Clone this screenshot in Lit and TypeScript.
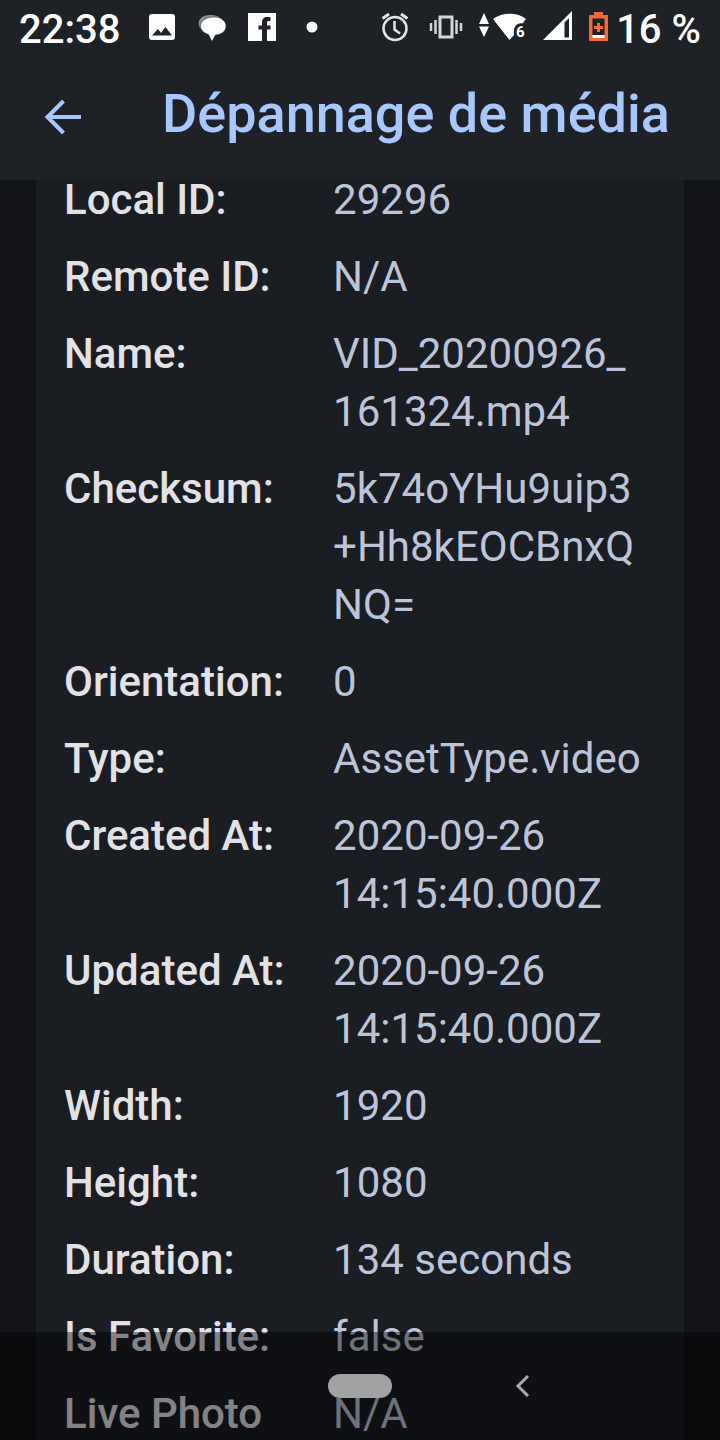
import { LitElement, html, css, svg } from "lit";
import { customElement } from "lit/decorators.js";

interface Row {
  label: string;
  value: string;
}

const ROWS: Row[] = [
  { label: "Local ID:", value: "29296" },
  { label: "Remote ID:", value: "N/A" },
  { label: "Name:", value: "VID_20200926_\n161324.mp4" },
  { label: "Checksum:", value: "5k74oYHu9uip3\n+Hh8kEOCBnxQ\nNQ=" },
  { label: "Orientation:", value: "0" },
  { label: "Type:", value: "AssetType.video" },
  { label: "Created At:", value: "2020-09-26\n14:15:40.000Z" },
  { label: "Updated At:", value: "2020-09-26\n14:15:40.000Z" },
  { label: "Width:", value: "1920" },
  { label: "Height:", value: "1080" },
  { label: "Duration:", value: "134 seconds" },
  { label: "Is Favorite:", value: "false" },
  { label: "Live Photo", value: "N/A" },
];

const icon = (width: number, body: unknown) => html`
  <svg class="icon" width=${width} height="32" viewBox="0 0 ${width} 32" aria-hidden="true">${body}</svg>
`;

@customElement("status-bar")
export class StatusBar extends LitElement {
  static styles = css`
    :host {
      display: flex;
      justify-content: space-between;
      align-items: center;
      height: 58px;
      padding: 0 19px;
      color: #fff;
      font: 500 40px/60px Roboto, sans-serif;
      white-space: nowrap;
    }
    .group {
      display: flex;
      align-items: center;
    }
    .notices {
      gap: 22px;
    }
    .time {
      margin-right: 6px;
    }
    .time,
    .level {
      padding-top: 2px;
    }
    .system {
      gap: 16px;
    }
    .battery {
      gap: 8px;
    }
    .icon {
      display: block;
      flex: none;
      overflow: visible;
    }
    .six {
      font: 700 15px Roboto, sans-serif;
    }
  `;

  render() {
    return html`
      <div class="group notices">
        <span class="time">22:38</span>
        ${icon(28, svg`<path fill="#fff" fill-rule="evenodd" d="M4 1h20q3 0 3 3v20q0 3-3 3H4q-3 0-3-3V4q0-3 3-3zM4 22.500h20l-6.500-8.500-4.500 6-3-4z"/>`)}
        ${icon(28, svg`
          <path fill="#8b8d90" d="M2 15C-2 8 3 2 12 2c5 0 9 1 11 4L6 17z"/>
          <path fill="#fff" stroke="#1e2125" stroke-width=".5" d="M16 4C8.500 4 2.500 8 2.500 13c0 4 3 7 8 8.500L14 28.500l3.500-6.500C24 21.500 28 18 28 13S23 4 16 4z"/>`)}
        ${icon(28, svg`<path fill="#fff" d="M0 0h28v28H0z"/>
          <path fill="#1e2125" d="M14 28V16.500h-3.500v-4H14v-3C14 6 16 4 19 4h3.500v4h-2c-1 0-1.500.5-1.500 1.500v3h3.500v4H19V28z"/>`)}
        ${icon(28, svg`<circle cx="14" cy="14" r="5.500" fill="#fff"/>`)}
      </div>
      <div class="group system">
        ${icon(32, svg`<g fill="none" stroke="#e4e4e5" stroke-width="2.500">
          <circle cx="14" cy="15.500" r="11.500"/><path d="M13.500 8v8.500l5.500 4"/>
          <path stroke-width="3" d="M1.500 5.500L8 1M20 1l6.500 4.500"/></g>`)}
        ${icon(34, svg`<g fill="none" stroke="#d5d6d7" stroke-width="2.500">
          <rect x="11" y="4" width="12" height="20" stroke-width="3"/>
          <path d="M6.500 7v14M2 10v8M27.500 7v14M32 10v8"/></g>`)}
        ${icon(48, svg`<g fill="#fff"><path d="M0 11L5 0l5 11zM0 13.500h10L5 24z"/>
          <path d="M14 6C23-1 39-1 47 6l-3.500 4.500c-6-1-9.500 4-8.500 11.500l-4.500 5z"/></g>
          <text class="six" x="37" y="23.500" fill="#fff">6</text>`)}
        ${icon(30, svg`<path fill="#fff" fill-rule="evenodd" d="M0 27L29-2v29zM21.500 9.500V24.500H26V5z"/>`)}
        <div class="group battery">
          ${icon(19, svg`<path fill="#f2693c" d="M5 2V-1h9v3h5v26H0V2z"/>
            <path fill="#1e2125" d="M3.500 5.500h12V22h-12z"/><path fill="#fff" d="M3.500 22h12v3h-12z"/>
            <path stroke="#f2693c" stroke-width="3" d="M5 14.500h9M9.500 10v9"/>`)}
          <span class="level">16 %</span>
        </div>
      </div>
    `;
  }
}

@customElement("nav-bar")
export class NavBar extends LitElement {
  static styles = css`
    :host {
      display: grid;
      grid-template-columns: 1fr 64px 1fr;
      align-items: center;
      height: 108px;
      background: rgba(0, 0, 0, 0.42);
    }
    button {
      appearance: none;
      display: block;
      margin: 0;
      padding: 0;
      border: 0;
      background: none;
    }
    .home {
      grid-column: 2;
      height: 24px;
      border-radius: 12px;
      background: #a1a2a4;
    }
    .back {
      margin-left: 123px;
      width: 16px;
      height: 24px;
    }
    svg {
      display: block;
    }
  `;

  render() {
    return html`
      <button class="home" aria-label="Home"></button>
      <button class="back" aria-label="Back">
        <svg width="16" height="24" viewBox="0 0 16 24" fill="none" stroke="#a9aaab" stroke-width="3">
          <path d="M13 2L3 12l10 10" />
        </svg>
      </button>
    `;
  }
}

@customElement("app-root")
export class AppRoot extends LitElement {
  static styles = css`
    :host {
      display: flex;
      flex-direction: column;
      position: relative;
      height: 100vh;
      overflow: hidden;
      background: #111318;
      font-family: Roboto, sans-serif;
    }
    .top {
      flex: none;
      z-index: 1;
      background: #1e2125;
    }
    .bar {
      display: flex;
      align-items: center;
      gap: 80px;
      height: 122px;
      box-sizing: border-box;
      padding: 0 44px 10px;
    }
    .arrow {
      appearance: none;
      flex: none;
      margin: 0;
      padding: 6px 0 0;
      border: 0;
      background: none;
    }
    .arrow svg {
      display: block;
    }
    h1 {
      margin: 0;
      color: #a9c7ff;
      font-size: 54px;
      font-weight: 500;
      line-height: 64px;
      white-space: nowrap;
    }
    .content {
      flex: 1;
      min-height: 0;
      margin-top: -9px;
      padding: 0 36px;
    }
    .details {
      display: grid;
      grid-template-columns: 5fr 6fr;
      row-gap: 19px;
      margin: 0;
      padding: 0 28px;
      background: #1a1d21;
      font-size: 42px;
      line-height: 58px;
    }
    dt {
      color: #e2e2e6;
      font-weight: 500;
      white-space: nowrap;
    }
    dd {
      margin: 0;
      color: #bdc4d8;
      white-space: pre-line;
    }
    .nav {
      position: absolute;
      left: 0;
      right: 0;
      bottom: 0;
    }
  `;

  render() {
    return html`
      <header class="top">
        <status-bar></status-bar>
        <div class="bar">
          <button class="arrow" aria-label="Retour">
            <svg width="38" height="36" viewBox="0 0 38 36" fill="none" stroke="#a9c7ff" stroke-width="4">
              <path d="M19.500 2L3.500 18l16 16M3.500 18H37" />
            </svg>
          </button>
          <h1>Dépannage de média</h1>
        </div>
      </header>
      <main class="content">
        <dl class="details">
          ${ROWS.map((row) => html`<dt>${row.label}</dt><dd>${row.value}</dd>`)}
        </dl>
      </main>
      <nav-bar class="nav"></nav-bar>
    `;
  }
}
